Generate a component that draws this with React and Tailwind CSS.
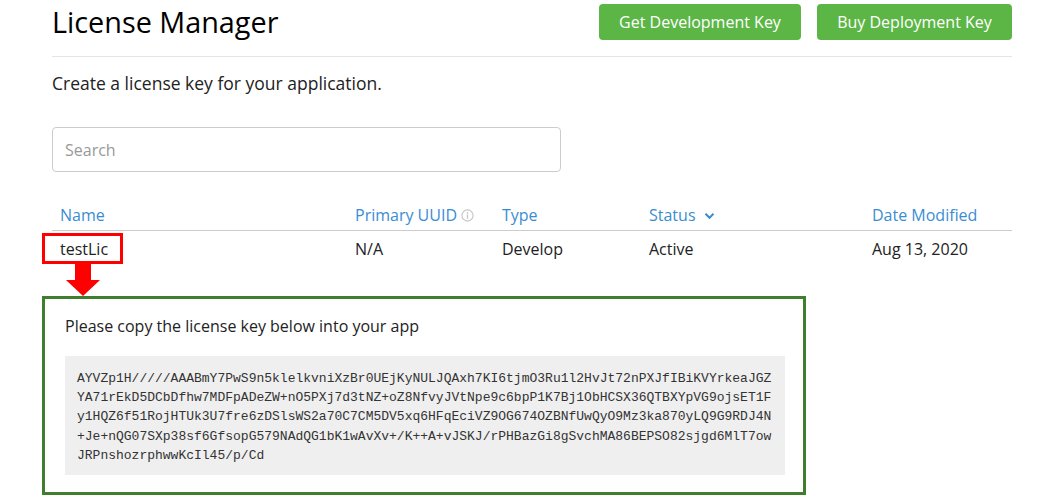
import React from "react";

const keyLines = [
  "AYVZp1H/////AAABmY7PwS9n5klelkvniXzBr0UEjKyNULJQAxh7KI6tjmO3Ru1l2HvJt72nPXJfIBiKVYrkeaJGZ",
  "YA71rEkD5DCbDfhw7MDFpADeZW+nO5PXj7d3tNZ+oZ8NfvyJVtNpe9c6bpP1K7Bj1ObHCSX36QTBXYpVG9ojsET1F",
  "y1HQZ6f51RojHTUk3U7fre6zDSlsWS2a70C7CM5DV5xq6HFqEciVZ9OG674OZBNfUwQyO9Mz3ka870yLQ9G9RDJ4N",
  "+Je+nQG07SXp38sf6GfsopG579NAdQG1bK1wAvXv+/K++A+vJSKJ/rPHBazGi8gSvchMA86BEPSO82sjgd6MlT7ow",
  "JRPnshozrphwwKcIl45/p/Cd",
];

export default function App() {
  return (
    <div className="w-[1063px] h-[498px] bg-white overflow-hidden font-['Open_Sans',sans-serif] text-[#222]">
      <div className="ml-[52px] w-[960px] pt-[4px]">
        {/* Header */}
        <div className="flex items-center justify-between h-[36px]">
          <h1 className="text-[28.8px] leading-none text-black">License Manager</h1>
          <div className="flex gap-[16px]">
            <button className="h-[36px] w-[202px] rounded-[4px] bg-[#5cb646] text-white text-[16px]">
              Get Development Key
            </button>
            <button className="h-[36px] w-[195px] rounded-[4px] bg-[#5cb646] text-white text-[16px]">
              Buy Deployment Key
            </button>
          </div>
        </div>
        <div className="mt-[16px] h-px bg-[#e5e5e5]" />

        <p className="mt-[14px] text-[17.5px] leading-[24px] text-[#222]">
          Create a license key for your application.
        </p>

        <div className="mt-[32px] w-[509px] h-[45px] rounded-[4px] border border-[#cccccc] flex items-center px-[12px]">
          <span className="text-[16px] text-[#999]">Search</span>
        </div>

        {/* Table */}
        <div className="mt-[27px]">
          <div className="grid grid-cols-[295px_147px_147px_223px_148px] h-[32px] items-center border-b border-[#cccccc] text-[16px] text-[#3a8dd3]">
            <div className="px-[8px]">Name</div>
            <div className="px-[8px] flex items-center gap-[4px]">
              Primary UUID
              <svg width="13" height="13" viewBox="0 0 14 14" className="mt-[1px]">
                <circle cx="7" cy="7" r="6" fill="none" stroke="#c4c4c4" strokeWidth="1.2" />
                <circle cx="7" cy="4.2" r="0.9" fill="#c4c4c4" />
                <rect x="6.3" y="6" width="1.4" height="4.5" fill="#c4c4c4" />
              </svg>
            </div>
            <div className="px-[8px]">Type</div>
            <div className="px-[8px] flex items-center gap-[8px]">
              Status
              <svg width="11" height="8" viewBox="0 0 11 8" className="mt-[2px]">
                <path d="M1.5 1.8 L5.5 5.8 L9.5 1.8" fill="none" stroke="#3a8dd3" strokeWidth="2" />
              </svg>
            </div>
            <div className="px-[8px]">Date Modified</div>
          </div>
          <div className="grid grid-cols-[295px_147px_147px_223px_148px] h-[36px] items-center text-[16px] text-[#222]">
            <div className="px-[8px] relative">
              <span>testLic</span>
              <div className="absolute left-[-10px] top-[-4px] w-[81px] h-[31px] border-[3px] border-[#ff0000]" />
              <svg
                className="absolute left-[13px] top-[26px]"
                width="36"
                height="33"
                viewBox="0 0 36 33"
              >
                <polygon points="10,0 26,0 26,17 35,17 18,33 1,17 10,17" fill="#ff0000" />
              </svg>
            </div>
            <div className="px-[8px]">N/A</div>
            <div className="px-[8px]">Develop</div>
            <div className="px-[8px]">Active</div>
            <div className="px-[8px]">Aug 13, 2020</div>
          </div>
        </div>

        {/* Key box */}
        <div className="mt-[29px] ml-[-10px] w-[764px] border-[3px] border-[#3f7e2e] pt-[15px] pl-[20px] pr-[18px] pb-[17px]">
          <p className="text-[16px] leading-[24px] text-[#222]">
            Please copy the license key below into your app
          </p>
          <div className="mt-[18px] w-[720px] bg-[#efefef] px-[12px] pt-[13px] pb-[10px] font-['Liberation_Mono','Courier_New',monospace] text-[13px] leading-[19.2px] text-[#333]">
            {keyLines.map((l, i) => (
              <div key={i} className="whitespace-nowrap">
                {l}
              </div>
            ))}
          </div>
        </div>
      </div>
    </div>
  );
}
